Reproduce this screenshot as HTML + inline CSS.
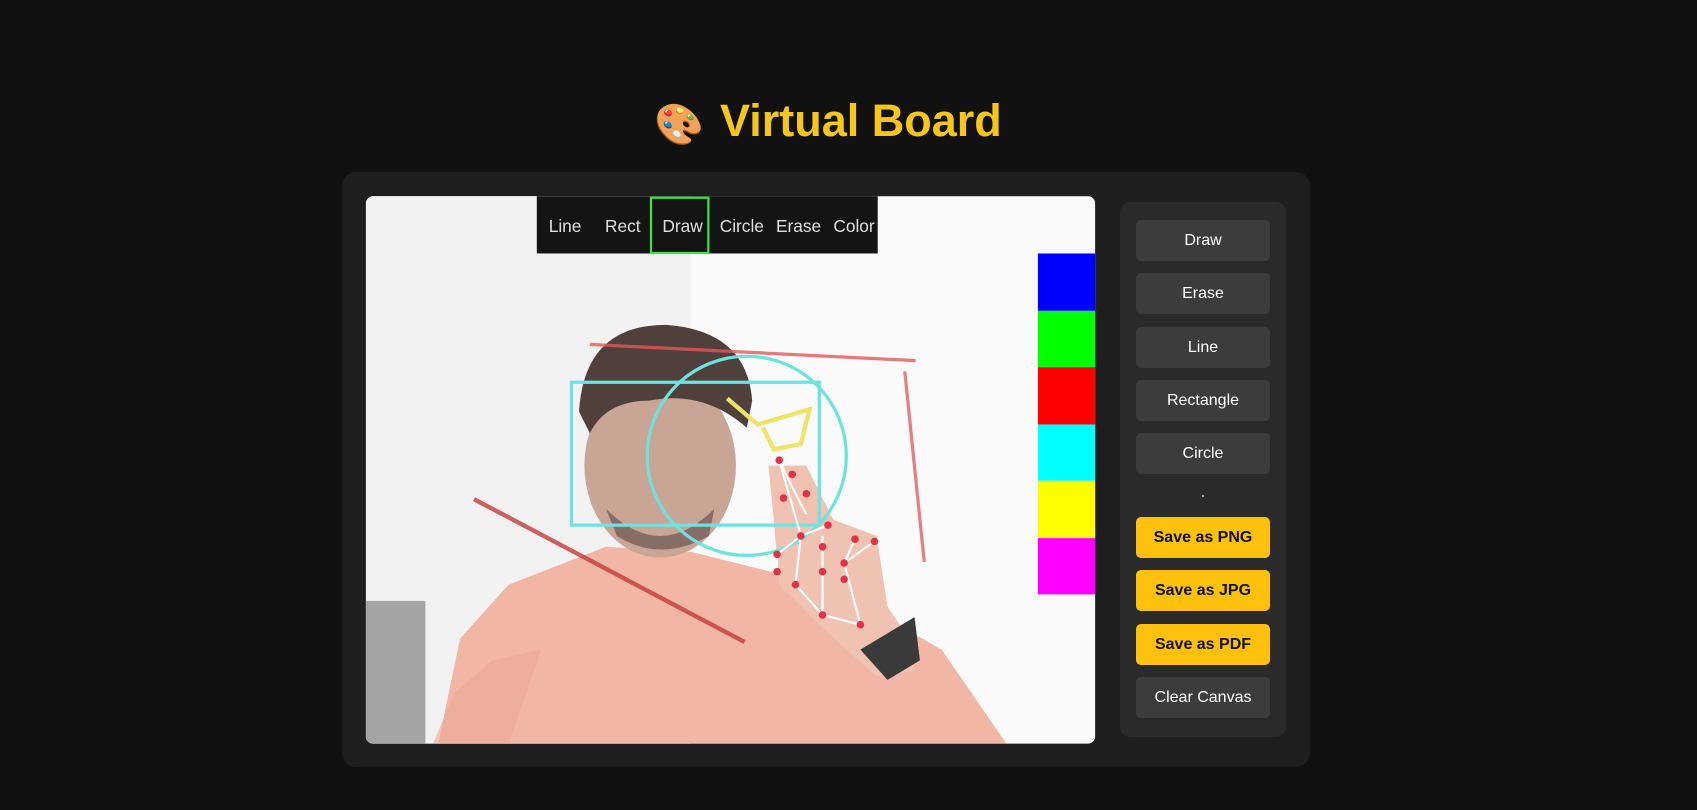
<!DOCTYPE html>
<html><head><meta charset="utf-8"><style>
html,body{margin:0;padding:0;background:#111111;width:1697px;height:810px;overflow:hidden;font-family:"Liberation Sans",sans-serif;}
.title{position:absolute;left:0;width:1656px;top:95px;text-align:center;font-weight:bold;font-size:45px;color:#f7c61a;}
.title span.e{font-size:40px;margin-right:16px;vertical-align:-2px}
.panel{position:absolute;left:342px;top:172px;width:968px;height:595px;background:#1e1e1e;border-radius:14px;}
.side{position:absolute;left:1120px;top:202px;width:166px;height:535px;background:#2a2a2a;border-radius:10px;}
.btn{position:absolute;left:1136px;width:134px;height:41px;background:#3c3c3c;border-radius:5px;color:#fff;font-size:16px;text-align:center;line-height:41px;}
.y{background:#fec10e;color:#111;font-weight:bold;}
svg{position:absolute;left:0;top:0;}
</style></head><body>
<div class="title"><span class="e">🎨</span>Virtual Board</div>
<div class="panel"></div>
<div class="side"></div>
<div class="btn" style="top:220px">Draw</div>
<div class="btn" style="top:273px">Erase</div>
<div class="btn" style="top:327px">Line</div>
<div class="btn" style="top:380px">Rectangle</div>
<div class="btn" style="top:433px">Circle</div>
<div style="position:absolute;left:1202px;top:495px;width:2px;height:2px;background:#aaa"></div>
<div class="btn y" style="top:517px">Save as PNG</div>
<div class="btn y" style="top:570px">Save as JPG</div>
<div class="btn y" style="top:624px">Save as PDF</div>
<div class="btn" style="top:677px">Clear Canvas</div>
<svg width="1697" height="810" viewBox="0 0 1568 748">
<defs><clipPath id="v"><rect x="338" y="181" width="674" height="506" rx="7"/></clipPath></defs>
<g clip-path="url(#v)">
<rect x="338" y="181" width="674" height="506" fill="#fafafa"/>
<rect x="338" y="181" width="300" height="506" fill="#f2f2f2"/>
<rect x="338" y="555" width="55" height="132" fill="#a4a4a2"/>
<path d="M405 687 L425 590 L470 540 L560 505 L640 510 L720 530 L800 560 L870 600 L930 687 Z" fill="#f2b6a4"/>
<path d="M400 687 L420 640 L455 610 L500 600 L470 687Z" fill="#eaa996" opacity="0.6"/>
<ellipse cx="610" cy="430" rx="70" ry="85" fill="#c9a596"/>
<path d="M535 380 Q540 300 615 300 Q690 305 695 370 L690 395 Q650 360 600 370 Q560 370 545 400 Z" fill="#50403c"/>
<path d="M560 470 Q610 520 660 470 L655 495 Q610 520 570 495Z" fill="#6a5650" opacity="0.7"/>
<path d="M710 430 L745 430 L770 480 L810 495 L820 560 L840 590 L845 620 L810 625 L760 580 L720 540 L715 480 Z" fill="#f0c2b2"/>
<path d="M795 600 L845 570 L850 610 L820 628Z" fill="#3a3a3a"/>
<line x1="545" y1="318" x2="846" y2="333" stroke="#e25a5a" stroke-width="3" opacity="0.8"/>
<line x1="836" y1="343" x2="854" y2="519" stroke="#e26262" stroke-width="3" opacity="0.8"/>
<line x1="438" y1="461" x2="688" y2="593" stroke="#c63b3b" stroke-width="4" opacity="0.8"/>
<rect x="528" y="353" width="229" height="132" fill="none" stroke="#6ee3e3" stroke-width="3"/>
<circle cx="690" cy="421" r="92" fill="none" stroke="#6ee3dd" stroke-width="3"/>
<path d="M672 368 L700 392 L748 378 L740 410 L715 415 L705 395" fill="none" stroke="#f0e36a" stroke-width="4"/>
<g stroke="#ffffff" stroke-width="2" fill="none">
<path d="M720 425 L740 495 L735 540 L760 568 L795 577 L780 520 L790 498 M740 495 L765 485 M720 425 L732 450 L745 475 M760 495 L760 528 L760 568 M780 520 L808 500 M740 495 L718 512 L718 528"/>
</g>
<g fill="#e2324a">
<circle cx="720" cy="425" r="3.5"/><circle cx="732" cy="438" r="3.5"/><circle cx="745" cy="456" r="3.5"/><circle cx="724" cy="460" r="3.5"/>
<circle cx="740" cy="495" r="3.5"/><circle cx="765" cy="485" r="3.5"/><circle cx="760" cy="505" r="3.5"/><circle cx="760" cy="528" r="3.5"/>
<circle cx="790" cy="498" r="3.5"/><circle cx="808" cy="500" r="3.5"/><circle cx="780" cy="520" r="3.5"/><circle cx="780" cy="535" r="3.5"/>
<circle cx="718" cy="512" r="3.5"/><circle cx="718" cy="528" r="3.5"/><circle cx="735" cy="540" r="3.5"/><circle cx="760" cy="568" r="3.5"/><circle cx="795" cy="577" r="3.5"/>
</g>
<rect x="496" y="181" width="315" height="53" fill="#141414"/>
<rect x="601.5" y="182.5" width="53" height="51" fill="none" stroke="#3ee63e" stroke-width="2"/>
<g fill="#e0e0e0" font-family="'Liberation Sans',sans-serif" font-size="16">
<text x="507" y="214">Line</text><text x="559" y="214">Rect</text><text x="612" y="214">Draw</text>
<text x="665" y="214">Circle</text><text x="717" y="214">Erase</text><text x="770" y="214">Color</text>
</g>
<rect x="959" y="234" width="53" height="53" fill="#0000ff"/>
<rect x="959" y="287" width="53" height="52" fill="#00ff00"/>
<rect x="959" y="339" width="53" height="53" fill="#ff0000"/>
<rect x="959" y="392" width="53" height="52" fill="#00ffff"/>
<rect x="959" y="444" width="53" height="53" fill="#ffff00"/>
<rect x="959" y="497" width="53" height="52" fill="#ff00ff"/>
</g>
</svg>
</body></html>
